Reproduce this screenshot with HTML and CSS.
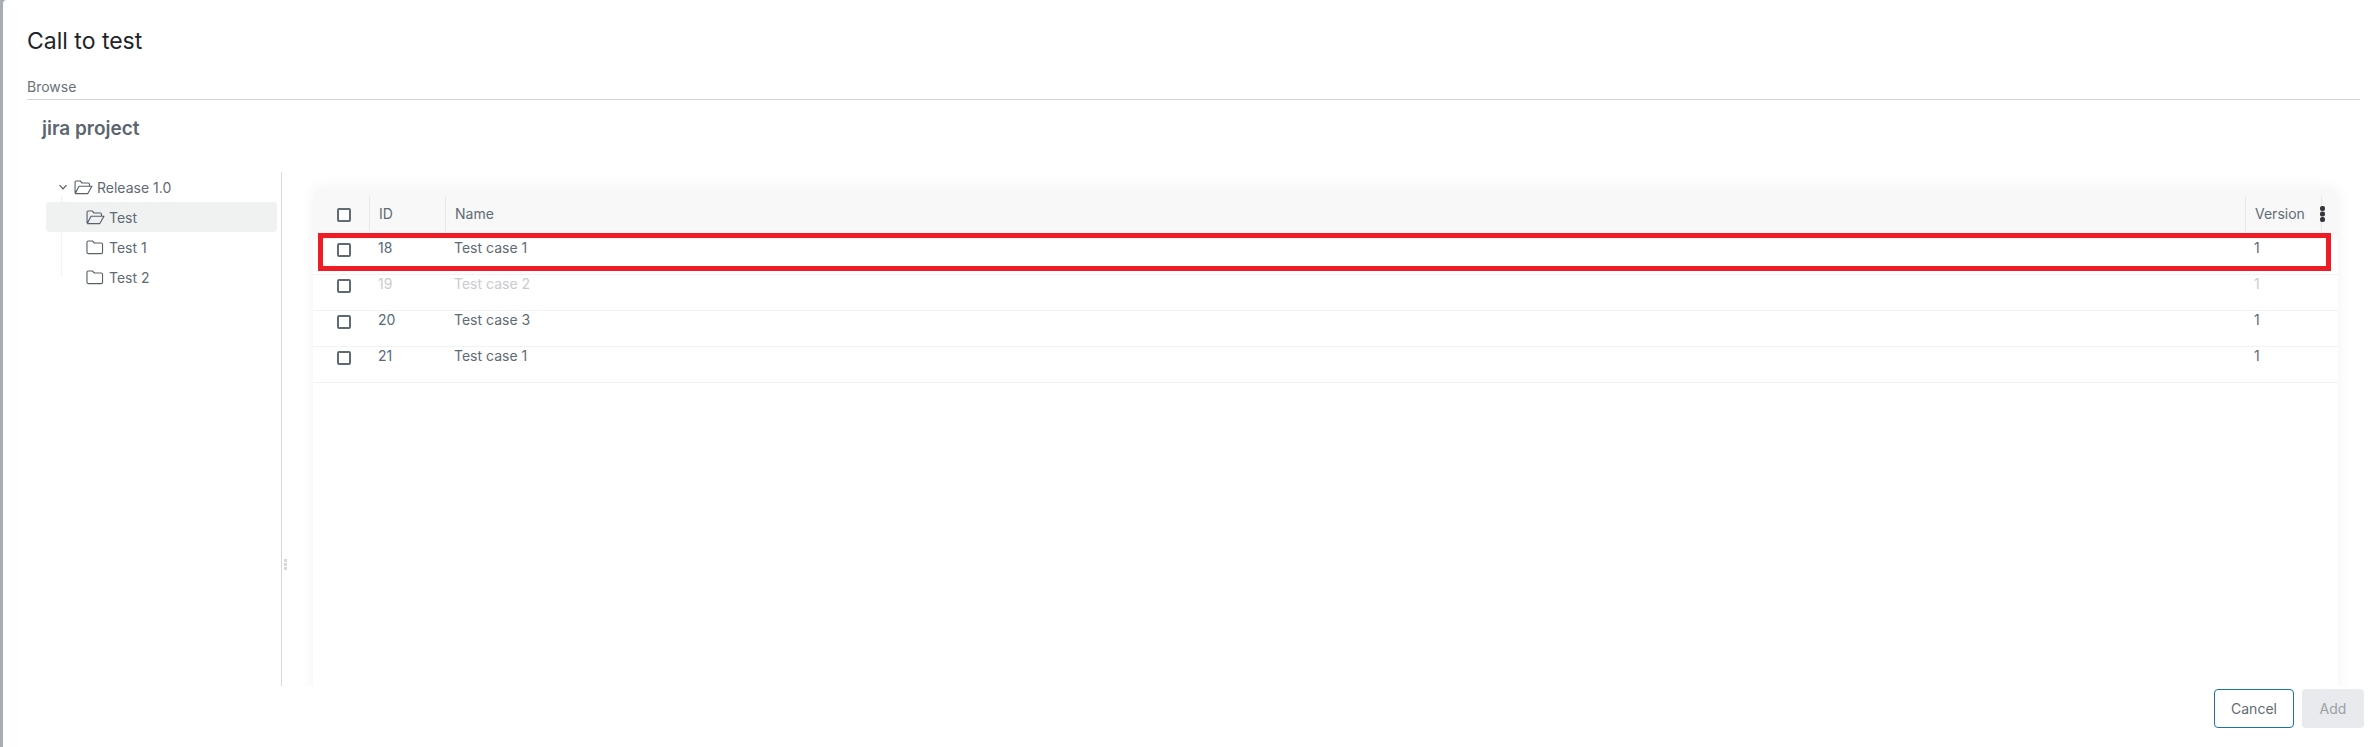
FILE: index.html
```html
<!DOCTYPE html>
<html lang="en">
<head>
<meta charset="utf-8">
<title>Call to test</title>
<link rel="stylesheet" href="styles.css">
</head>
<body>
<div class="modal">
  <header class="modal-head"><h1 class="title">Call to test</h1></header>
  <div class="tabs"><span class="tab">Browse</span></div>
  <h2 class="project">jira project</h2>
  <div class="content">
    <aside class="tree">
      <div class="tree-guide"></div>
      <div class="node root">
        <svg class="chev" viewBox="0 0 10 10"><path d="M1.500 3.200 5 6.800l3.500-3.600"/></svg>
        <svg class="folder" viewBox="0 0 20 16"><path d="M1 14V2.200C1 1.500 1.500 1 2.200 1h4.300l2 2.200h6.700c.7 0 1.200.5 1.200 1.200V6.600M1 14.500h13.600L19 6.600H5.200L1.400 14"/></svg>
        <span>Release 1.0</span>
      </div>
      <div class="node child selected">
        <svg class="folder" viewBox="0 0 20 16"><path d="M1 14V2.200C1 1.500 1.500 1 2.200 1h4.300l2 2.200h6.700c.7 0 1.200.5 1.200 1.200V6.600M1 14.500h13.600L19 6.600H5.200L1.400 14"/></svg>
        <span>Test</span>
      </div>
      <div class="node child">
        <svg class="folder" viewBox="0 0 20 16"><path d="M2.300 1h4.400l2 2.200h7.400c.8 0 1.400.6 1.400 1.400v8.500c0 .8-.6 1.400-1.400 1.400H2.300c-.8 0-1.400-.6-1.400-1.400V2.400C.9 1.600 1.500 1 2.300 1z"/></svg>
        <span>Test 1</span>
      </div>
      <div class="node child">
        <svg class="folder" viewBox="0 0 20 16"><path d="M2.300 1h4.400l2 2.200h7.400c.8 0 1.400.6 1.400 1.400v8.500c0 .8-.6 1.400-1.400 1.400H2.300c-.8 0-1.400-.6-1.400-1.400V2.400C.9 1.600 1.500 1 2.300 1z"/></svg>
        <span>Test 2</span>
      </div>
    </aside>
    <div class="divider"><span class="grip"></span></div>
    <section class="card">
      <div class="row head">
        <div class="cell check"><span class="box"></span></div>
        <div class="cell sep">ID</div>
        <div class="cell sep">Name</div>
        <div class="cell sep">Version</div>
        <div class="cell sep menu">
          <svg class="dots" viewBox="0 0 5 16"><rect width="5" height="5" rx="2"/><rect y="5.500" width="5" height="5" rx="2"/><rect y="11" width="5" height="5" rx="2"/></svg>
        </div>
      </div>
      <div class="row">
        <div class="cell check"><span class="box"></span></div>
        <div class="cell id">18</div>
        <div class="cell">Test case 1</div>
        <div class="cell">1</div>
        <div class="cell"></div>
      </div>
      <div class="row muted">
        <div class="cell check"><span class="box"></span></div>
        <div class="cell id">19</div>
        <div class="cell">Test case 2</div>
        <div class="cell">1</div>
        <div class="cell"></div>
      </div>
      <div class="row">
        <div class="cell check"><span class="box"></span></div>
        <div class="cell id">20</div>
        <div class="cell">Test case 3</div>
        <div class="cell">1</div>
        <div class="cell"></div>
      </div>
      <div class="row">
        <div class="cell check"><span class="box"></span></div>
        <div class="cell id">21</div>
        <div class="cell">Test case 1</div>
        <div class="cell">1</div>
        <div class="cell"></div>
      </div>
      <div class="highlight"></div>
    </section>
  </div>
  <footer class="foot">
    <button class="btn cancel" type="button">Cancel</button>
    <button class="btn add" type="button">Add</button>
  </footer>
</div>
</body>
</html>
```
FILE: styles.css
```css
* { box-sizing: border-box; }
html, body { height: 100%; }
body {
  margin: 0;
  overflow: hidden;
  background: #a9aeb2;
  font-family: Inter, "Liberation Sans", sans-serif;
  color: #5f6b73;
}
.modal {
  margin-left: 3px;
  height: 747px;
  background: #fff;
  border-radius: 4px 0 0 0;
  display: flex;
  flex-direction: column;
  padding: 0 11px 19px 24px;
}
.modal-head { height: 75px; padding-top: 27px; }
.title {
  margin: 0;
  font-size: 23px;
  line-height: 29px;
  font-weight: 400;
  color: #212529;
}
.tabs {
  height: 25px;
  padding-top: 3px;
  margin-right: 4px;
  border-bottom: 1px solid #d4d6d8;
  font-size: 14px;
  line-height: 17px;
  color: #6a7178;
}
.project {
  margin: 17px 0 0 15px;
  font-size: 19px;
  line-height: 24px;
  font-weight: 600;
  color: #5b6670;
}
.content {
  flex: 1;
  min-height: 0;
  display: flex;
  margin-top: 31px;
  overflow: hidden;
}
.tree {
  position: relative;
  width: 254px;
  padding: 0 4px 0 19px;
  font-size: 14px;
  flex: none;
}
.tree-guide {
  position: absolute;
  left: 34px;
  top: 25px;
  height: 79px;
  border-left: 1px dotted #e3e5e6;
}
.node {
  position: relative;
  height: 30px;
  display: flex;
  align-items: center;
  border-radius: 4px;
}
.root { padding-left: 12px; }
.child { padding-left: 40px; }
.selected { background: #f0f1f1; }
.chev { width: 10px; height: 10px; margin-right: 6px; fill: none; stroke: #4f5a63; stroke-width: 1.2; }
.folder { width: 19px; height: 15px; margin-right: 4px; fill: none; stroke: #56616b; stroke-width: 1.2; stroke-linejoin: round; }
.divider {
  position: relative;
  width: 1px;
  background: #d8d9dc;
  flex: none;
}
.grip {
  position: absolute;
  left: 3px;
  top: 387px;
  width: 3px;
  height: 11px;
  background: repeating-linear-gradient(to bottom, #d9d6d6 0 3px, transparent 3px 4px);
}
.card {
  position: relative;
  flex: 1;
  min-width: 0;
  margin: 16px 26px -20px 31px;
  border-radius: 10px 10px 0 0;
  background: #fff;
  box-shadow: 0 0 14px rgba(60, 70, 80, .07);
  font-size: 14px;
}
.row {
  display: grid;
  grid-template-columns: 56px 76px 1fr 76px 17px;
  height: 36px;
  border-bottom: 1px solid #f1f2f3;
  line-height: 17px;
}
.head {
  height: 51px;
  background: #f8f8f9;
  border-radius: 10px 10px 0 0;
  border-bottom: 0;
  padding: 8px 0;
  align-items: stretch;
}
.cell { padding: 0 0 0 9px; min-width: 0; }
.head .cell { display: flex; align-items: center; }
.head .sep { border-left: 1px solid #e6e7ea; }
.check { padding: 4px 0 0 24px; }
.head .check { padding: 3px 0 0 24px; }
.box {
  display: block;
  width: 14px;
  height: 14px;
  border: 2px solid #5f6a72;
  border-radius: 2px;
  background: #fff;
}
.id { color: #55697a; }
.muted .cell { color: #c9cbce; }
.head .menu { padding: 0; }
.dots {
  display: block;
  width: 5px;
  height: 16px;
  margin-left: -2px;
  fill: #33363c;
  flex: none;
}
.highlight {
  position: absolute;
  left: 5px;
  right: 7px;
  top: 45px;
  height: 38px;
  border: 5px solid #ef1c26;
}
.foot {
  flex: none;
  height: 42px;
  padding-top: 3px;
  display: flex;
  justify-content: flex-end;
  gap: 8px;
}
.btn {
  height: 39px;
  border-radius: 4px;
  font: 400 14px Inter, "Liberation Sans", sans-serif;
  padding: 0;
}
.cancel { width: 80px; background: #fff; border: 1px solid #1a73b0; color: #5f6b73; }
.add { width: 62px; background: #e8eaed; border: 0; color: #9aa0a5; }
```
